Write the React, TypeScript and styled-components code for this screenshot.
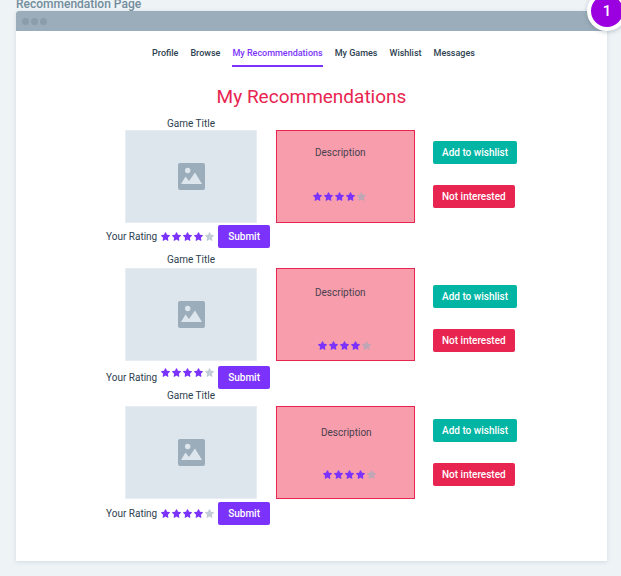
import React, { useState } from "react";
import styled, { createGlobalStyle } from "styled-components";

const GlobalStyle = createGlobalStyle`
  *, *::before, *::after { box-sizing: border-box; }
  body {
    margin: 0;
    background: #eef3f6;
    color: #2d4150;
    font-family: Roboto, "Liberation Sans", sans-serif;
    font-size: 10px;
    line-height: 14px;
  }
  button { font-family: inherit; }
`;

const Page = styled.div`
  position: relative;
  min-height: 100vh;
  padding: 0 14px 14px 16px;
  overflow: hidden;
`;

const PageLabel = styled.div`
  display: flex;
  align-items: flex-end;
  height: 11px;
  color: #738c9c;
  font-size: 12px;
  font-weight: 500;
  line-height: 14px;
`;

const Badge = styled.div`
  position: absolute;
  top: -9px;
  right: -6px;
  display: flex;
  align-items: center;
  justify-content: center;
  width: 40px;
  height: 40px;
  border: 4px solid #fff;
  border-radius: 50%;
  background: #9a00e0;
  box-shadow: 0 1px 4px rgba(60, 80, 100, 0.3);
  color: #fff;
  font-size: 15px;
  font-weight: 500;
`;

const BrowserWindow = styled.div`
  border-radius: 3px 3px 0 0;
  background: #fff;
  box-shadow: 0 1px 4px rgba(70, 100, 120, 0.16);
`;

const TitleBar = styled.div`
  display: flex;
  align-items: center;
  gap: 2px;
  height: 20px;
  padding-left: 6px;
  border-radius: 3px 3px 0 0;
  background: #9badba;
`;

const WindowDot = styled.span`
  width: 7px;
  height: 7px;
  border-radius: 50%;
  background: #8a9dab;
`;

const Nav = styled.nav`
  display: flex;
  justify-content: center;
  gap: 12px;
  padding: 15px 0 0 4px;
`;

const NavLink = styled.a<{ $active?: boolean }>`
  height: 21px;
  border-bottom: 2px solid ${(p) => (p.$active ? "#7b33fb" : "transparent")};
  color: ${(p) => (p.$active ? "#7b33fb" : "inherit")};
  font-size: 9px;
  font-weight: 500;
  text-decoration: none;
  white-space: nowrap;
`;

const Content = styled.main`
  padding-bottom: 36px;
`;

const Heading = styled.h1`
  margin: 18px 0 8px;
  color: #e82450;
  font-size: 19px;
  font-weight: 400;
  line-height: 24px;
  text-align: center;
`;

const GameRow = styled.article`
  display: grid;
  grid-template-columns: 164px 139px 96px;
  justify-content: center;
  column-gap: 6px;
  min-height: 136px;
`;

const GameCard = styled.section`
  display: flex;
  flex-direction: column;
`;

const Cover = styled.div<{ $gap: number }>`
  display: flex;
  align-items: center;
  justify-content: center;
  height: 93px;
  margin: ${(p) => p.$gap}px 13px 0 19px;
  border: 1px solid #e7edf2;
  background: #dee6ed;
`;

const GameTitle = styled.h2`
  margin: 0 13px 0 19px;
  font-size: 10px;
  font-weight: 400;
  line-height: 13px;
  text-align: center;
`;

const RatingForm = styled.form<{ $gap: number }>`
  display: flex;
  align-items: center;
  justify-content: space-between;
  height: 23px;
  margin-top: ${(p) => p.$gap}px;
  white-space: nowrap;
`;

const StarGroup = styled.div<{ $raised?: boolean }>`
  display: flex;
  gap: 2px;
  align-self: ${(p) => (p.$raised ? "flex-start" : "center")};
  padding-top: ${(p) => (p.$raised ? 2 : 0)}px;
`;

const StarLabel = styled.label`
  display: flex;
  cursor: pointer;
`;

const HiddenRadio = styled.input`
  position: absolute;
  width: 1px;
  height: 1px;
  margin: 0;
  opacity: 0;
`;

const StarSvg = styled.svg<{ $filled: boolean }>`
  display: block;
  width: 9px;
  height: 9px;
  fill: ${(p) => (p.$filled ? "#7b33fb" : "#9badba")};
  opacity: ${(p) => (p.$filled ? 1 : 0.6)};
`;

const Button = styled.button<{ $tone: "violet" | "teal" | "red" }>`
  height: 23px;
  padding: 0 ${(p) => (p.$tone === "violet" ? 10 : 9)}px;
  border: 0;
  border-radius: 2px;
  background: ${(p) => ({ violet: "#7b33fb", teal: "#00b5a3", red: "#e82450" })[p.$tone]};
  color: #fff;
  font-size: 10px;
  font-weight: 500;
  line-height: 14px;
  white-space: nowrap;
  cursor: pointer;
`;

const DescriptionPanel = styled.section<{ $offset: number; $top: number }>`
  height: 93px;
  margin-top: ${(p) => p.$offset}px;
  padding-top: ${(p) => p.$top}px;
  border: 1px solid #e82450;
  background: #f79dac;
`;

const DescriptionText = styled.p<{ $inset: number }>`
  margin: 0 0 0 ${(p) => p.$inset}px;
  color: #4b3f4e;
`;

const DescriptionStars = styled.div<{ $inset: number; $gap: number }>`
  display: flex;
  gap: 2px;
  margin: ${(p) => p.$gap}px 0 0 ${(p) => p.$inset}px;
`;

const Actions = styled.div<{ $top: number }>`
  display: flex;
  flex-direction: column;
  align-items: flex-start;
  gap: 21px;
  padding: ${(p) => p.$top}px 0 0 12px;
`;

const LINKS = ["Profile", "Browse", "My Recommendations", "My Games", "Wishlist", "Messages"];
const STARS = [1, 2, 3, 4, 5];

interface Game {
  id: number;
  coverGap: number;
  ratingGap: number;
  raised: boolean;
  textTop: number;
  textInset: number;
  starsGap: number;
  starsInset: number;
  actionsTop: number;
}

const GAMES: Game[] = [
  { id: 1, coverGap: 0, ratingGap: 2, raised: false, textTop: 15, textInset: 38, starsGap: 32, starsInset: 36, actionsTop: 24 },
  { id: 2, coverGap: 2, ratingGap: 5, raised: true, textTop: 17, textInset: 38, starsGap: 41, starsInset: 41, actionsTop: 32 },
  { id: 3, coverGap: 4, ratingGap: 3, raised: false, textTop: 19, textInset: 44, starsGap: 30, starsInset: 46, actionsTop: 30 },
];

function Star({ filled }: { filled: boolean }) {
  return (
    <StarSvg $filled={filled} viewBox="0 0 18 18" aria-hidden="true">
      <path d="M8 1.1Q9-.3 10 1.1L12 5.6 16.8 6.2Q18.4 6.7 17.4 8L13.8 11.5 14.7 16.4Q14.6 18 13 17.5L9 15.2 5 17.5Q3.4 18 3.3 16.4L4.2 11.5.6 8Q-.4 6.7 1.2 6.2L6 5.6Z" />
    </StarSvg>
  );
}

function PictureIcon() {
  return (
    <svg width="27" height="27" viewBox="0 0 27 27" aria-hidden="true">
      <rect width="27" height="27" rx="2" fill="#9badba" />
      <circle cx="9.7" cy="7.5" r="2.7" fill="#dee6ed" />
      <path d="M3 21 7.5 13.6 11 18 17 9.5 24 21Z" fill="#dee6ed" />
    </svg>
  );
}

function GameEntry({ game }: { game: Game }) {
  const [rating, setRating] = useState(4);
  return (
    <GameRow>
      <GameCard>
        <GameTitle>Game Title</GameTitle>
        <Cover $gap={game.coverGap}>
          <PictureIcon />
        </Cover>
        <RatingForm $gap={game.ratingGap} onSubmit={(e) => e.preventDefault()}>
          <span id={`rating-${game.id}`}>Your Rating</span>
          <StarGroup $raised={game.raised} role="radiogroup" aria-labelledby={`rating-${game.id}`}>
            {STARS.map((n) => (
              <StarLabel key={n}>
                <HiddenRadio
                  type="radio"
                  name={`rating-${game.id}`}
                  aria-label={`${n} stars`}
                  checked={rating === n}
                  onChange={() => setRating(n)}
                />
                <Star filled={n <= rating} />
              </StarLabel>
            ))}
          </StarGroup>
          <Button $tone="violet" type="submit">Submit</Button>
        </RatingForm>
      </GameCard>
      <DescriptionPanel $offset={13 + game.coverGap} $top={game.textTop}>
        <DescriptionText $inset={game.textInset}>Description</DescriptionText>
        <DescriptionStars $gap={game.starsGap} $inset={game.starsInset} role="img" aria-label="4 out of 5 stars">
          {STARS.map((n) => (
            <Star key={n} filled={n <= 4} />
          ))}
        </DescriptionStars>
      </DescriptionPanel>
      <Actions $top={game.actionsTop}>
        <Button $tone="teal" type="button">Add to wishlist</Button>
        <Button $tone="red" type="button">Not interested</Button>
      </Actions>
    </GameRow>
  );
}

export default function App() {
  return (
    <>
      <GlobalStyle />
      <Page>
        <PageLabel>Recommendation Page</PageLabel>
        <BrowserWindow>
          <TitleBar>
            <WindowDot />
            <WindowDot />
            <WindowDot />
          </TitleBar>
          <Nav>
            {LINKS.map((link) => (
              <NavLink key={link} href="#" $active={link === "My Recommendations"}>
                {link}
              </NavLink>
            ))}
          </Nav>
          <Content>
            <Heading>My Recommendations</Heading>
            {GAMES.map((game) => (
              <GameEntry key={game.id} game={game} />
            ))}
          </Content>
        </BrowserWindow>
        <Badge>1</Badge>
      </Page>
    </>
  );
}
